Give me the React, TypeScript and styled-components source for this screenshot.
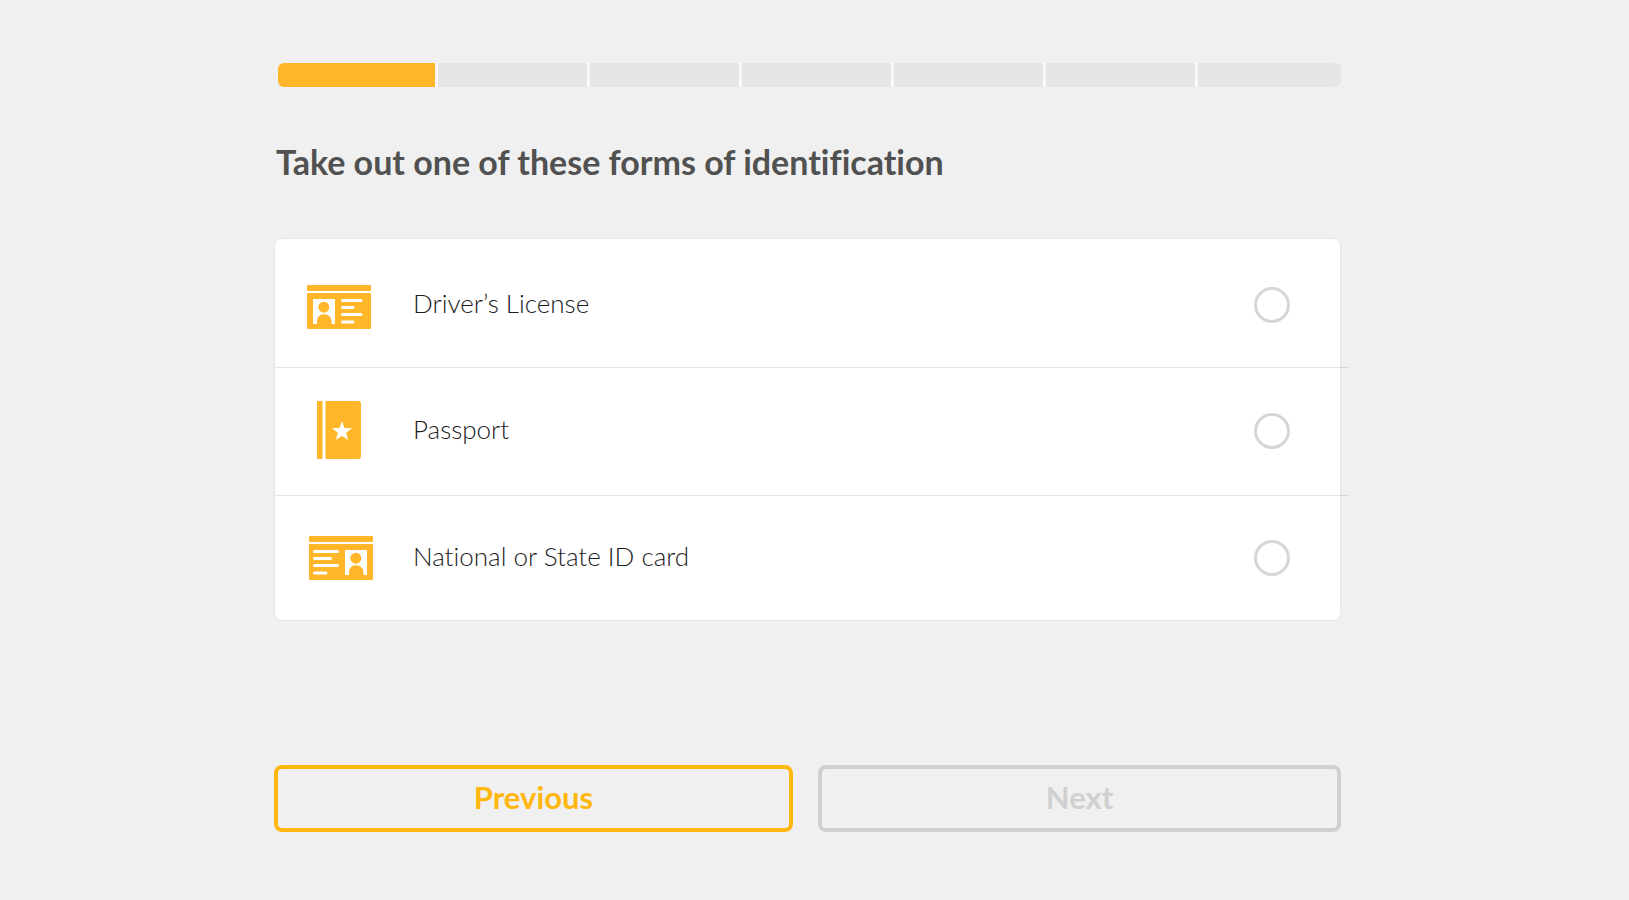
import React, { useState } from "react";
import styled, { createGlobalStyle } from "styled-components";

const GlobalStyle = createGlobalStyle`
  * { box-sizing: border-box; }
  body {
    margin: 0;
    background: #f0f0f0;
    color: #4a4a4a;
    font-family: Lato, "Open Sans", sans-serif;
    font-variant-ligatures: none;
  }
`;

const Page = styled.div`
  display: grid;
  grid-template-columns: 274fr 1067fr 288fr;
  padding: 63px 0 68px;
`;

const Content = styled.main`
  grid-column: 2;
  min-width: 0;
`;

const Progress = styled.div`
  display: grid;
  grid-template-columns: 157fr repeat(5, 152fr) 146fr;
  height: 24px;
  margin-left: 4px;
  border-radius: 6px;
  overflow: hidden;
`;

const Step = styled.div<{ $done: boolean }>`
  background: ${(p) => (p.$done ? "#ffb629" : "#e6e6e6")};
  & + & {
    border-left: 3px solid #f8f8f8;
  }
`;

const Title = styled.h1`
  margin: 55px 0 0 2px;
  font-size: 34px;
  font-weight: 700;
  line-height: 40px;
  color: #505150;
`;

const Options = styled.fieldset`
  margin: 56px 0 0;
  padding: 0;
  min-width: 0;
  border: 1px solid #e4e4e4;
  border-radius: 8px;
  background: #fff;
`;

const OptionRow = styled.label`
  position: relative;
  display: flex;
  align-items: center;
  height: 128px;
  padding: 0 50px 2px 32px;
  cursor: pointer;

  &:first-of-type {
    height: 129px;
    padding-top: 5px;
  }
  &:last-of-type {
    height: 124px;
    padding-bottom: 0;
  }
  &:not(:last-of-type)::after {
    content: "";
    position: absolute;
    left: 0;
    right: -9px;
    bottom: 0;
    height: 1px;
    background: rgba(0, 0, 0, 0.1);
  }
`;

const OptionIcon = styled.svg`
  flex: none;
  width: 68px;
  height: 60px;
`;

const OptionName = styled.span`
  flex: 1;
  margin-left: 38px;
  padding-bottom: 4px;
  font-size: 26px;
  font-weight: 300;
  line-height: 32px;
  color: #1c1c1c;
`;

const Radio = styled.input`
  appearance: none;
  flex: none;
  width: 36px;
  height: 36px;
  margin: 0;
  border: 3px solid #d6d6d6;
  border-radius: 50%;
  cursor: pointer;

  &:checked {
    border: 10px solid #ffb629;
  }
`;

const Actions = styled.div`
  display: grid;
  grid-template-columns: 519fr 523fr;
  gap: 25px;
  margin-top: 144px;
`;

const ActionButton = styled.button`
  height: 67px;
  padding: 0 0 4px;
  border: 4px solid #ffb60f;
  border-radius: 8px;
  background: transparent;
  color: #ffb60f;
  font-family: inherit;
  font-size: 31px;
  font-weight: 700;
  line-height: 36px;
  cursor: pointer;

  &:disabled {
    border-color: #d0d0d0;
    color: #d0d0d0;
    cursor: default;
  }
`;

const Portrait = ({ x, y }: { x: number; y: number }) => (
  <g transform={`translate(${x} ${y})`}>
    <rect width="22" height="25" fill="#fff" />
    <circle cx="10.8" cy="8.2" r="5.5" />
    <path d="M4 25v-2.5C4 18 7 15.2 11 15.2s7.500 2.800 7.500 7.300V25z" />
  </g>
);

const LicenseIcon = () => (
  <OptionIcon viewBox="0 0 68 60" fill="#ffb629" aria-hidden="true">
    <rect y="10" width="64" height="6" rx="1" />
    <rect y="18" width="64" height="36" rx="1" />
    <Portrait x={6} y={24} />
    <path d="M35.5 25.5h18.5M35.5 32.5h10.5M35.5 39.5h18.5M35.5 47h10.5" stroke="#fff" strokeWidth="3" strokeLinecap="round" />
  </OptionIcon>
);

const PassportIcon = () => (
  <OptionIcon viewBox="0 0 68 60" fill="#ffb629" aria-hidden="true">
    <path d="M10 0h5.5v58H10zM18.5 0H51q3 0 3 3v52q0 3-3 3H18.5z" />
    <path d="M35 20l2.5 7 7.5.2-5.9 4.6 2 7.2-6.1-4.2-6.1 4.2 2-7.2-5.9-4.6 7.5-.2z" fill="#fff" />
  </OptionIcon>
);

const IdCardIcon = () => (
  <OptionIcon viewBox="0 0 68 60" fill="#ffb629" aria-hidden="true">
    <rect x="2" y="8" width="64" height="6" rx="1" />
    <rect x="2" y="16" width="64" height="36" rx="1" />
    <Portrait x={38} y={22} />
    <path d="M7.5 23.5h23M7.5 30.5h16M7.5 37.5h23M7.5 45h11.5" stroke="#fff" strokeWidth="3" strokeLinecap="round" />
  </OptionIcon>
);

const documents = [
  { id: "license", name: "Driver’s License", Icon: LicenseIcon },
  { id: "passport", name: "Passport", Icon: PassportIcon },
  { id: "id-card", name: "National or State ID card", Icon: IdCardIcon },
];

const steps = [0, 1, 2, 3, 4, 5, 6];

export default function App() {
  const [choice, setChoice] = useState("");
  return (
    <Page>
      <GlobalStyle />
      <Content>
        <Progress role="progressbar" aria-label="Progress" aria-valuemin={0} aria-valuemax={7} aria-valuenow={1}>
          {steps.map((step) => (
            <Step key={step} $done={step === 0} />
          ))}
        </Progress>
        <Title id="question">Take out one of these forms of identification</Title>
        <Options aria-labelledby="question">
          {documents.map(({ id, name, Icon }) => (
            <OptionRow key={id} htmlFor={id}>
              <Icon />
              <OptionName>{name}</OptionName>
              <Radio
                type="radio"
                id={id}
                name="document"
                checked={choice === id}
                onChange={() => setChoice(id)}
              />
            </OptionRow>
          ))}
        </Options>
        <Actions>
          <ActionButton type="button">Previous</ActionButton>
          <ActionButton type="button" disabled={!choice}>Next</ActionButton>
        </Actions>
      </Content>
    </Page>
  );
}
